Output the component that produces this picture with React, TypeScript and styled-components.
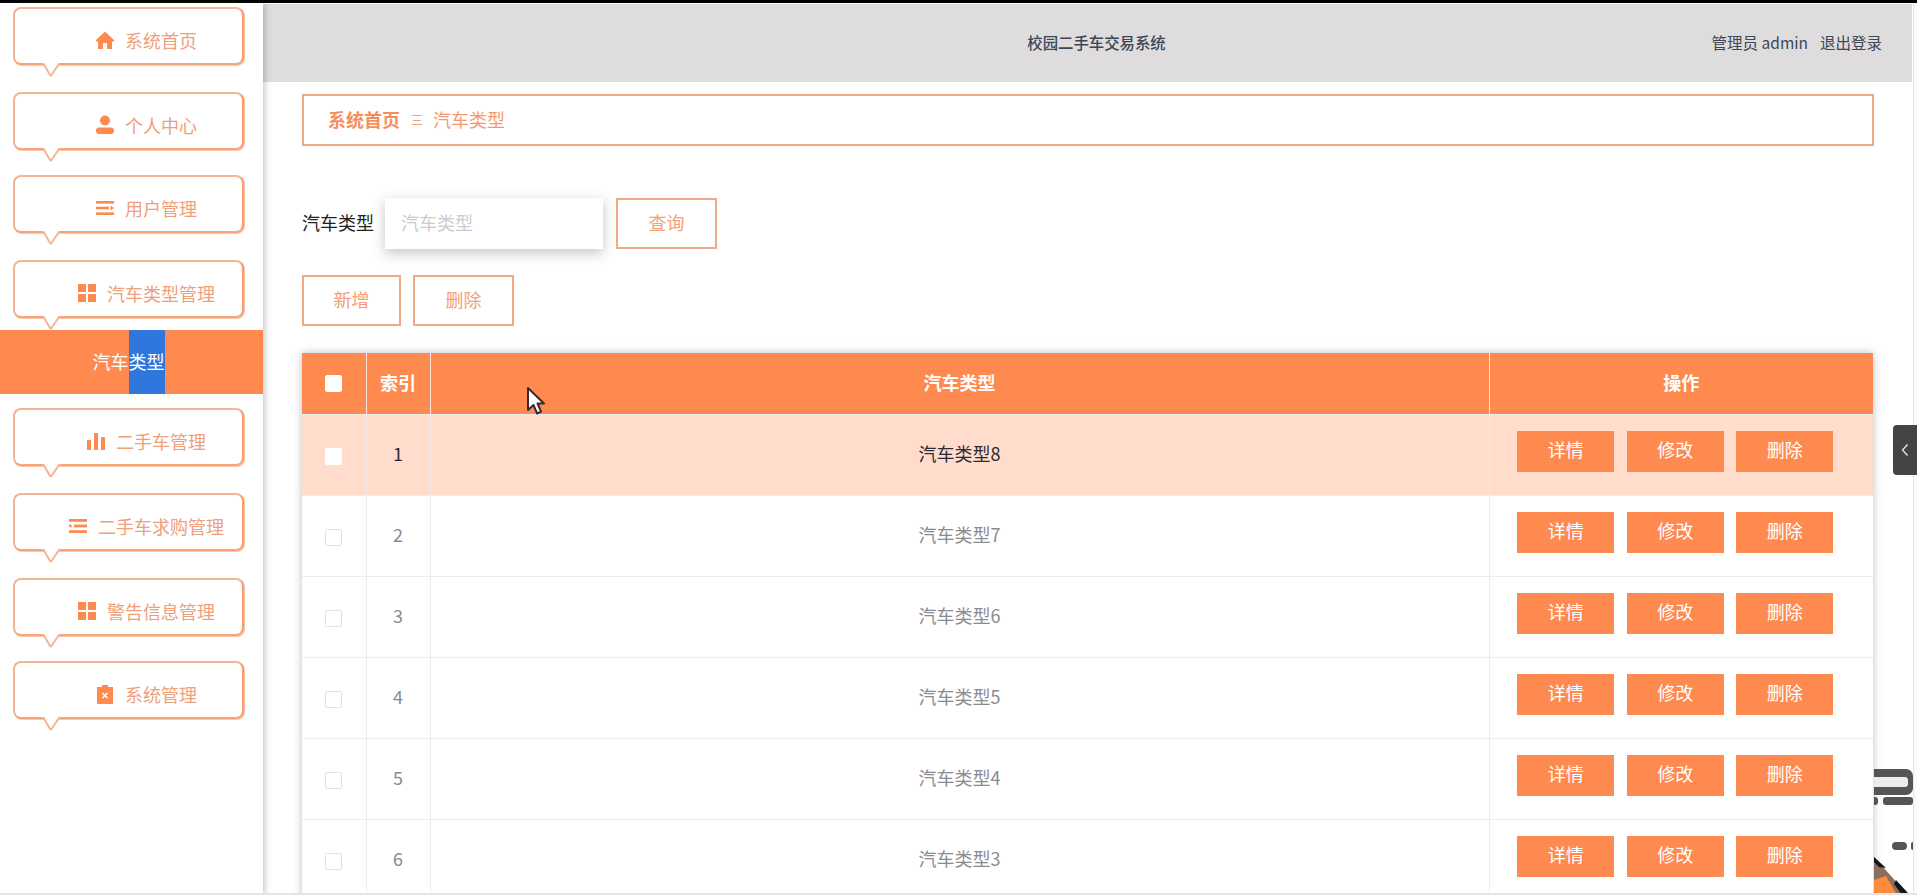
import React from 'react';
import styled, { createGlobalStyle } from 'styled-components';

const Global = createGlobalStyle`
  html, body { margin: 0; padding: 0; height: 100%; overflow: hidden; background: #fff; }
  body { font-family: "Noto Sans CJK SC", "Liberation Sans", sans-serif; }
  * { box-sizing: border-box; }
`;

const Screen = styled.div`
  position: relative;
  width: 1917px;
  height: 895px;
  overflow: hidden;
  background: #fff;
  display: flex;
  flex-direction: column;
`;
const BlackEdge = styled.div`
  height: 3px;
  flex: none;
  background: #000;
`;
const Body = styled.div`
  flex: 1;
  min-height: 0;
  display: flex;
`;
const Sidebar = styled.aside`
  width: 263px;
  flex: none;
  padding-top: 4px;
  background: #fff;
  box-shadow: 1px 0 7px rgba(60, 55, 60, 0.35);
  position: relative;
  z-index: 2;
`;
const Bubble = styled.div<{ $after: number }>`
  position: relative;
  width: 231px;
  height: 58px;
  margin: 0 0 ${p => p.$after}px 13px;
  padding: 8px 0 0 35px;
  border: 2px solid #f3b595;
  border-right-color: #fb9a6a;
  border-bottom-color: #f9a57a;
  border-radius: 8px;
  background: #fff;
  box-shadow: 1px 1px 0 #fbc6a8;
  display: flex;
  align-items: center;
  justify-content: center;
  gap: 10px;
  color: #ee9f7b;
  font-size: 18px;
  line-height: 24px;
  white-space: nowrap;
`;
const Tail = styled.svg`
  position: absolute;
  left: 26px;
  bottom: -14px;
  width: 22px;
  height: 14px;
`;
const IconBox = styled.svg`
  width: 20px;
  height: 20px;
  flex: none;
  fill: #ff8a50;
`;
const SubItem = styled.div`
  position: relative;
  height: 64px;
  margin: 0 0 14px;
  padding-right: 6px;
  background: #ff8a50;
  color: #fff;
  font-size: 18px;
  display: flex;
  justify-content: center;
`;
const SubText = styled.span`
  display: flex;
  align-items: center;
  padding-bottom: 2px;
`;
const Selected = styled.span`
  display: flex;
  align-items: center;
  padding-bottom: 2px;
  background: #2f77dc;
`;
const Main = styled.main`
  width: 1649px;
  flex: none;
  display: flex;
  flex-direction: column;
`;
const Header = styled.header`
  height: 78px;
  flex: none;
  margin-top: 1px;
  padding: 0 30px 3px 48px;
  background: #dfdcde;
  display: grid;
  grid-template-columns: 1fr auto 1fr;
  align-items: center;
  color: #3b4754;
  font-size: 15.5px;
`;
const Title = styled.div`
  grid-column: 2;
  font-weight: 500;
  font-size: 15.4px;
`;
const UserBox = styled.div`
  grid-column: 3;
  justify-self: end;
  display: flex;
  gap: 12px;
`;
const Content = styled.div`
  padding: 12px 38px 0 39px;
  display: flex;
  flex-direction: column;
`;
const Crumbs = styled.nav`
  height: 52px;
  flex: none;
  padding: 0 0 2px 24px;
  border: 2px solid #edaa85;
  display: flex;
  align-items: center;
  font-size: 18px;
  color: #f59a70;
`;
const CrumbHome = styled.b`
  font-weight: 700;
  color: #f78d5b;
`;
const CrumbSep = styled.span`
  margin: 0 10px 0 11px;
  font-size: 12px;
  color: #e8a583;
`;
const SearchRow = styled.div`
  margin-top: 52px;
  display: flex;
  align-items: center;
`;
const Label = styled.span`
  font-size: 18px;
  color: #222;
  margin: 0 11px 4px 0;
`;
const SearchInput = styled.input`
  width: 218px;
  height: 51px;
  padding: 0 16px 4px;
  border: none;
  outline: none;
  background: #fff;
  font: inherit;
  font-size: 18px;
  box-shadow: 0 4px 12px rgba(60, 60, 80, 0.3);
  &::placeholder { color: #c9ccd3; opacity: 1; }
`;
const GhostButton = styled.button<{ $w: number }>`
  width: ${p => p.$w}px;
  height: 51px;
  padding: 0 0 3px;
  border: 2px solid #edaa85;
  background: #fff;
  color: #f59e78;
  font: inherit;
  font-size: 18px;
`;
const SearchButton = styled(GhostButton)`
  margin-left: 13px;
`;
const ActionRow = styled.div`
  margin-top: 26px;
  display: flex;
  gap: 12px;
`;
const TableWrap = styled.div`
  margin-top: 27px;
  width: 1571px;
  box-shadow: 0 0 8px rgba(70, 70, 90, 0.35);
`;
const Table = styled.table`
  width: 1571px;
  table-layout: fixed;
  border-collapse: collapse;
  font-size: 18px;
`;
const HeadCell = styled.th`
  height: 61px;
  padding: 0 0 2px;
  background: #ff8a50;
  color: #fff;
  font-weight: 700;
  font-size: 18px;
  text-align: center;
  border-left: 1.5px solid #fde6da;
  &:first-child { border-left: none; }
`;
const Row = styled.tr<{ $active: boolean }>`
  background: ${p => (p.$active ? '#ffdccb' : '#fff')};
  color: ${p => (p.$active ? '#2b2b33' : '#8b8b8f')};
`;
const Cell = styled.td`
  height: 81px;
  padding: 0;
  text-align: center;
  border: 1px solid #ededed;
  &:first-child { border-left: none; }
  &:last-child { border-right: none; }
`;
const TextCell = styled(Cell)`
  padding-bottom: 3px;
`;
const Check = styled.span<{ $strong: boolean }>`
  display: block;
  width: 17px;
  height: 17px;
  margin: 3px auto 0;
  background: #fff;
  border-radius: 2px;
  border: 1px solid ${p => (p.$strong ? '#fff' : '#e2e2e6')};
`;
const Ops = styled.div`
  display: flex;
  justify-content: center;
  gap: 12.5px;
  padding: 0 12px 6px 0;
`;
const OpButton = styled.button`
  width: 97px;
  height: 41px;
  padding: 0 0 5px;
  border: none;
  background: #ff8a50;
  color: #fff;
  font: inherit;
  font-size: 18px;
`;
const Rail = styled.div`
  flex: 1;
  border-left: 1px solid #e6e6ea;
  margin-left: 1px;
  background: #fbfbfd;
`;
const Handle = styled.div`
  position: absolute;
  z-index: 4;
  left: 1893px;
  top: 425px;
  width: 24px;
  height: 50px;
  background: #444;
  border-radius: 4px 0 0 4px;
  display: flex;
  align-items: center;
  justify-content: center;
`;
const Cursor = styled.svg`
  position: absolute;
  z-index: 5;
  left: 526px;
  top: 386px;
  width: 20px;
  height: 30px;
`;
const Backdrop = styled.svg`
  position: absolute;
  z-index: 3;
  left: 1874px;
  top: 768px;
  width: 39px;
  height: 127px;
`;
const BottomEdge = styled.div`
  position: absolute;
  z-index: 6;
  left: 0;
  right: 0;
  bottom: 0;
  height: 2px;
  background: #e4e4f0;
`;

const paths: Record<string, React.ReactNode> = {
  home: <path d="M10 1.5 1 10v1.5h2V19h5v-6h4v6h5v-7.5h2V10z" />,
  user: (
    <>
      <circle cx="10" cy="5.5" r="5" />
      <rect x="1" y="12.5" width="18" height="6.5" rx="3.2" />
    </>
  ),
  menu: (
    <>
      <rect x="1" y="3" width="18" height="2.6" />
      <rect x="1" y="8.7" width="13" height="2.6" />
      <path d="M15.5 7.5 19 10l-3.5 2.5z" />
      <rect x="1" y="14.4" width="18" height="2.6" />
    </>
  ),
  grid: (
    <>
      <rect x="1" y="1" width="8" height="8" />
      <rect x="11" y="1" width="8" height="8" />
      <rect x="1" y="11" width="8" height="8" />
      <rect x="11" y="11" width="8" height="8" />
    </>
  ),
  bars: (
    <>
      <rect x="1" y="9" width="4" height="10" />
      <rect x="8" y="2" width="4" height="17" />
      <rect x="15" y="6" width="4" height="13" />
    </>
  ),
  list: (
    <>
      <rect x="1" y="3" width="18" height="2.8" />
      <circle cx="2.4" cy="10" r="1.4" />
      <rect x="6" y="8.6" width="13" height="2.8" />
      <rect x="1" y="14.2" width="18" height="2.8" />
    </>
  ),
  clip: (
    <>
      <path d="M7 1h6v2h5v17H2V3h5z" />
      <path d="m7.5 9 5 5m0-5-5 5" stroke="#fff" strokeWidth="1.5" fill="none" />
    </>
  ),
};

const Icon = ({ name }: { name: string }) => <IconBox viewBox="0 0 20 20">{paths[name]}</IconBox>;

const BubbleItem = ({ icon, label, after }: { icon: string; label: string; after: number }) => (
  <Bubble $after={after}>
    <Icon name={icon} />
    <span>{label}</span>
    <Tail viewBox="0 0 22 14">
      <path d="M1 -2 9 12 Q9.6 13 10.5 12 L20 -2" fill="#fff" stroke="#f3b595" strokeWidth="2" strokeLinejoin="round" />
    </Tail>
  </Bubble>
);

const topItems = [
  { icon: 'home', label: '系统首页', after: 27 },
  { icon: 'user', label: '个人中心', after: 25 },
  { icon: 'menu', label: '用户管理', after: 27 },
  { icon: 'grid', label: '汽车类型管理', after: 12 },
];
const lowerItems = [
  { icon: 'bars', label: '二手车管理', after: 27 },
  { icon: 'list', label: '二手车求购管理', after: 27 },
  { icon: 'grid', label: '警告信息管理', after: 25 },
  { icon: 'clip', label: '系统管理', after: 0 },
];
const rows = [
  [1, '汽车类型8'],
  [2, '汽车类型7'],
  [3, '汽车类型6'],
  [4, '汽车类型5'],
  [5, '汽车类型4'],
  [6, '汽车类型3'],
];

export default function App() {
  return (
    <Screen>
      <Global />
      <BlackEdge />
      <Body>
        <Sidebar>
          {topItems.map(i => (
            <BubbleItem key={i.label} {...i} />
          ))}
          <SubItem>
            <SubText>汽车</SubText>
            <Selected>类型</Selected>
          </SubItem>
          {lowerItems.map(i => (
            <BubbleItem key={i.label} {...i} />
          ))}
        </Sidebar>
        <Main>
          <Header>
            <Title>校园二手车交易系统</Title>
            <UserBox>
              <span>管理员 admin</span>
              <span>退出登录</span>
            </UserBox>
          </Header>
          <Content>
            <Crumbs>
              <CrumbHome>系统首页</CrumbHome>
              <CrumbSep>三</CrumbSep>
              <span>汽车类型</span>
            </Crumbs>
            <SearchRow>
              <Label>汽车类型</Label>
              <SearchInput placeholder="汽车类型" readOnly />
              <SearchButton $w={101}>查询</SearchButton>
            </SearchRow>
            <ActionRow>
              <GhostButton $w={99}>新增</GhostButton>
              <GhostButton $w={101}>删除</GhostButton>
            </ActionRow>
            <TableWrap>
              <Table>
                <colgroup>
                  <col width="64" />
                  <col width="64" />
                  <col width="1059" />
                  <col width="384" />
                </colgroup>
                <thead>
                  <tr>
                    <HeadCell>
                      <Check $strong />
                    </HeadCell>
                    <HeadCell>索引</HeadCell>
                    <HeadCell>汽车类型</HeadCell>
                    <HeadCell>操作</HeadCell>
                  </tr>
                </thead>
                <tbody>
                  {rows.map(([n, name], i) => (
                    <Row key={n} $active={i === 0}>
                      <Cell>
                        <Check $strong={i === 0} />
                      </Cell>
                      <TextCell>{n}</TextCell>
                      <TextCell>{name}</TextCell>
                      <Cell>
                        <Ops>
                          <OpButton>详情</OpButton>
                          <OpButton>修改</OpButton>
                          <OpButton>删除</OpButton>
                        </Ops>
                      </Cell>
                    </Row>
                  ))}
                </tbody>
              </Table>
            </TableWrap>
          </Content>
        </Main>
        <Rail />
      </Body>
      <Handle>
        <svg width="10" height="14" viewBox="0 0 10 14" fill="none" stroke="#e8e8e8" strokeWidth="1.3">
          <path d="M7.5 1.5 2.5 7l5 5.5" />
        </svg>
      </Handle>
      <Cursor viewBox="0 0 20 30">
        <path d="M2 2v22l5.5-5 3.6 8.5 4-1.8-3.6-8.2H18z" fill="#fff" stroke="#3a2a2e" strokeWidth="2" strokeLinejoin="round" />
      </Cursor>
      <Backdrop viewBox="0 0 39 127">
        <path d="M0 1h32a7 7 0 0 1 7 7v12a7 7 0 0 1-7 7H0z" fill="#555" />
        <path d="M0 9h31a3 3 0 0 1 3 3v4a3 3 0 0 1-3 3H0z" fill="#ececec" />
        <rect x="-2" y="29" width="6" height="8" rx="3" fill="#555" />
        <rect x="9" y="29" width="30" height="8" rx="3" fill="#555" />
        <rect x="18" y="74" width="15" height="8" rx="4" fill="#555" />
        <rect x="37" y="74" width="4" height="8" rx="2" fill="#555" />
        <path d="M0 89 34 127H0z" fill="#8a6e5e" />
        <path d="M0 112 12 108 23 127H0z" fill="#ff8a3c" />
        <path d="M0 89 12 100 5 99 0 94zM22 112 34 125 28 127 20 116z" fill="#151515" />
      </Backdrop>
      <BottomEdge />
    </Screen>
  );
}
